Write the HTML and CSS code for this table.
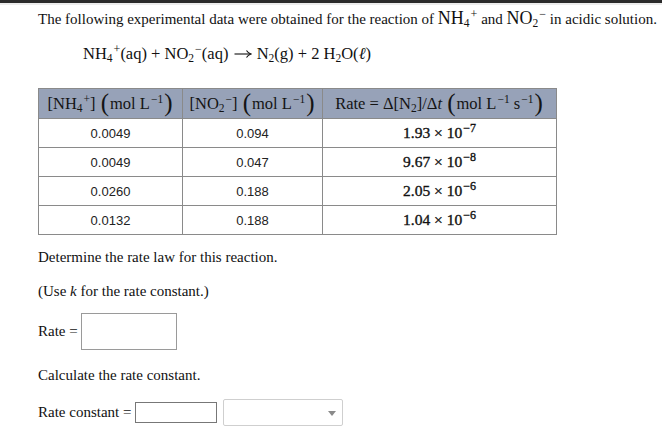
FILE: index.html
```html
<!DOCTYPE html>
<html>
<head>
<meta charset="utf-8">
<link rel="stylesheet" href="styles.css">
</head>
<body>
<div class="topbar"></div>
<div class="subbar"></div>
<div class="content">
  <p class="intro">The following experimental data were obtained for the reaction of <span class="m">NH<sub>4</sub><sup>+</sup></span> and <span class="m">NO<sub>2</sub><sup>−</sup></span> in acidic solution.</p>
  <p class="equation m">NH<sub>4</sub><sup>+</sup>(aq) + NO<sub>2</sub><sup>−</sup>(aq) <svg class="arrow" width="18" height="10" viewBox="0 0 18 10"><path d="M0.5 5H16.5" stroke="#111" stroke-width="1.1" fill="none"/><path d="M12.5 1.5Q14 4 17 5Q14 6 12.5 8.5" stroke="#111" stroke-width="1.1" fill="none"/></svg> N<sub>2</sub>(g) + 2 H<sub>2</sub>O(<i>ℓ</i>)</p>
  <table class="data">
    <thead>
      <tr>
        <th class="c1">[NH<sub>4</sub><sup>+</sup>] <span class="bp">(</span>mol L<sup>−1</sup><span class="bp">)</span></th>
        <th class="c2">[NO<sub>2</sub><sup>−</sup>] <span class="bp">(</span>mol L<sup>−1</sup><span class="bp">)</span></th>
        <th class="c3">Rate = Δ[N<sub>2</sub>]/Δ<i>t</i> <span class="bp">(</span>mol L<sup>−1</sup> s<sup>−1</sup><span class="bp">)</span></th>
      </tr>
    </thead>
    <tbody>
      <tr><td>0.0049</td><td>0.094</td><td class="sci">1.93 × 10<sup>−7</sup></td></tr>
      <tr><td>0.0049</td><td>0.047</td><td class="sci">9.67 × 10<sup>−8</sup></td></tr>
      <tr><td>0.0260</td><td>0.188</td><td class="sci">2.05 × 10<sup>−6</sup></td></tr>
      <tr><td>0.0132</td><td>0.188</td><td class="sci">1.04 × 10<sup>−6</sup></td></tr>
    </tbody>
  </table>
  <p class="q q1">Determine the rate law for this reaction.</p>
  <p class="q q2">(Use <i>k</i> for the rate constant.)</p>
  <div class="answer a1">
    <span>Rate =</span>
    <span class="box box-big"></span>
  </div>
  <p class="q q3">Calculate the rate constant.</p>
  <div class="answer a2">
    <span>Rate constant =</span>
    <span class="box box-small"></span>
    <span class="select"><span class="caret"></span></span>
  </div>
</div>
</body>
</html>
```

FILE: styles.css
```css
html, body {
  margin: 0;
  padding: 0;
  background: #ffffff;
}
body {
  font-family: "Liberation Serif", "Times New Roman", serif;
  font-size: 15px;
  color: #111;
}
.topbar {
  height: 3px;
  background: #2b2b2b;
}
.subbar {
  height: 2px;
  background: #ececec;
}
.content {
  padding-left: 38px;
}
p {
  margin: 0;
  line-height: 20px;
}
.intro {
  margin-top: 3px;
  white-space: nowrap;
}
.m {
  font-family: "Liberation Serif", serif;
  font-size: 18px;
}
sub {
  font-size: 11.5px;
  vertical-align: -3px;
  line-height: 0;
}
sup {
  font-size: 12px;
  vertical-align: 6px;
  line-height: 0;
  margin-left: 1px;
}
.equation {
  margin-top: 15px;
  padding-left: 45px;
  font-size: 16.5px;
  height: 20px;
}
.arrow {
  vertical-align: 0;
  margin: 0 1px;
}
.data {
  margin-top: 24px;
  border-collapse: collapse;
  width: 519px;
  table-layout: fixed;
}
.data th, .data td {
  border: 1px solid #8a8a8a;
  padding: 0;
  text-align: center;
}
.data th {
  background: #97a2b8;
  height: 29px;
  line-height: 18px;
  font-weight: normal;
  font-size: 16.5px;
  color: #141414;
  white-space: nowrap;
  overflow: hidden;
}
.data th sup, .data th sub {
  font-size: 11.5px;
}
.data th.c1 { width: 143px; }
.data th.c2 { width: 139px; }
.data th.c3 { width: 233px; }
.bp {
  font-size: 25px;
  vertical-align: -2px;
  line-height: 0;
  margin: 0 1px;
}
.data td {
  height: 28px;
  font-family: "Liberation Sans", Arial, sans-serif;
  font-size: 13px;
  color: #222;
}
.data td.sci {
  font-family: "Liberation Serif", serif;
  font-size: 15.5px;
  color: #111;
  -webkit-text-stroke: 0.35px #111;
}
.q1 { margin-top: 12px; }
.q2 { margin-top: 14px; }
.answer {
  display: flex;
  align-items: center;
  gap: 3px;
}
.a1 {
  margin-top: 12px;
  height: 37px;
}
.q3 { margin-top: 15px; }
.a2 {
  margin-top: 14px;
  height: 27px;
}
.box {
  display: block;
  box-sizing: border-box;
  background: #fff;
  border: 1px solid #9a9a9a;
}
.box-big {
  width: 96px;
  height: 37px;
}
.box-small {
  width: 82px;
  height: 21px;
  margin-left: 1px;
  border-color: #777;
}
.select {
  display: block;
  position: relative;
  box-sizing: border-box;
  width: 120px;
  height: 27px;
  margin-left: 3px;
  border: 1px solid #cfcfcf;
  border-radius: 2px;
  background: #fff;
}
.caret {
  position: absolute;
  right: 6px;
  top: 11px;
  width: 0;
  height: 0;
  border-left: 4px solid transparent;
  border-right: 4px solid transparent;
  border-top: 5px solid #8a8a8a;
}
```
